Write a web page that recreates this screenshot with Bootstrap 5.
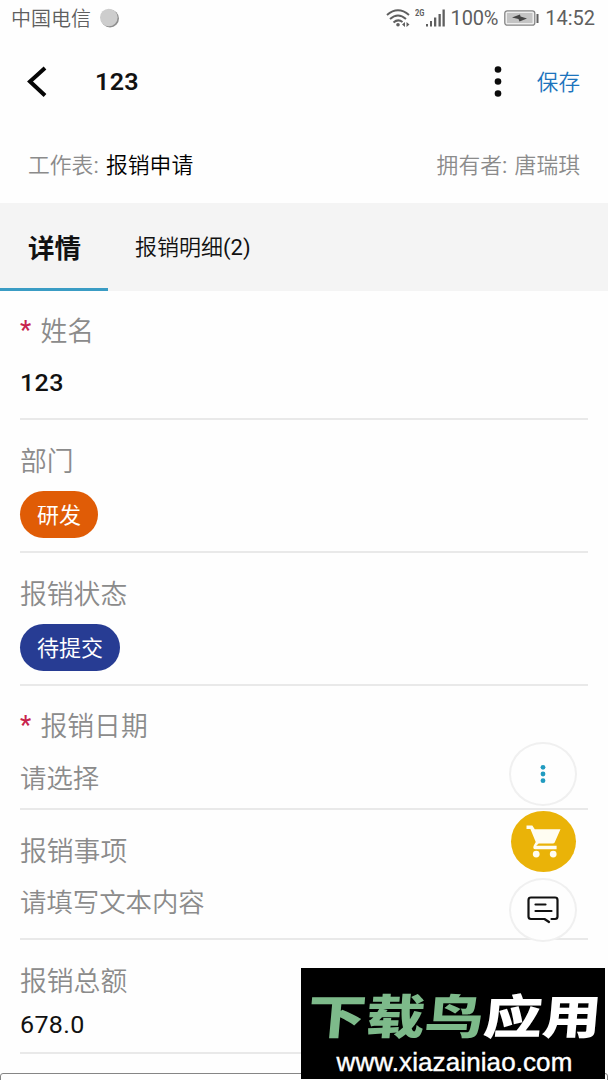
<!DOCTYPE html>
<html lang="zh-CN">
<head>
    <meta charset="UTF-8">
    <meta name="viewport" content="width=device-width, initial-scale=1">
    <title>报销申请</title>

    <!-- Bootstrap CSS -->
    <link href="https://cdn.jsdelivr.net/npm/bootstrap@5.3.0/dist/css/bootstrap.min.css" rel="stylesheet">

    <style>
        body {
            font-family: Roboto, "Noto Sans CJK SC", sans-serif;
            background-color: #fefefe;
            color: #111;
            line-height: 1;
        }
        svg {
            display: block;
            flex: none;
        }
        .screen {
            width: 608px;
            height: 1080px;
        }
        /* Status bar */
        .status-bar {
            height: 36px;
            padding: 0 13px 0 11px;
            font-size: 20px;
            color: #5f5f5f;
        }
        .carrier {
            font-weight: 350;
            padding-top: 2px;
        }
        .percent {
            margin-left: 6px;
            letter-spacing: -.2px;
        }
        .clock {
            margin-left: 5px;
        }
        /* Title bar */
        .title-bar {
            height: 91px;
            padding: 0 28px 0 26px;
        }
        .title-bar h1 {
            font-size: 23px;
            font-weight: 600;
            letter-spacing: .3px;
            margin: 2px 0 0 47px;
            transform: scaleX(1.09);
            transform-origin: left;
        }
        .save-link {
            font-size: 21.6px;
            font-weight: 350;
            color: #1c74bd;
            text-decoration: none;
            margin-left: 35px;
            padding-top: 3px;
        }
        .sheet-info {
            height: 76px;
            padding: 2px 28px 0;
            font-size: 21.8px;
            font-weight: 350;
            color: #8b8b8b;
        }
        .sheet-info b {
            font-weight: 350;
            color: #000;
        }
        .colon {
            font-weight: 400;
            margin-right: 2px;
        }
        /* Tabs */
        .sheet-tabs {
            height: 88px;
            background-color: #f4f4f4;
        }
        .sheet-tabs .nav-link {
            color: #111;
            font-size: 22px;
            font-weight: 350;
            padding: 4px 27px 0;
            border-bottom: 3px solid transparent;
        }
        .sheet-tabs .nav-link.active {
            font-size: 26.5px;
            font-weight: 700;
            padding: 7px 27px 0 28px;
            border-bottom-color: #3a9cc4;
        }
        /* Form fields */
        .field {
            margin: 0 20px;
            border-bottom: 2px solid #e9e9e9;
            font-size: 26.8px;
            font-weight: 350;
            color: #8b8b8b;
        }
        .field-name { height: 129px; }
        .field-tag { height: 133px; }
        .field-date { height: 124px; }
        .field-item { height: 130px; }
        .field-total { height: 114px; }
        .field-label {
            line-height: 40px;
            padding-top: 21px;
        }
        .field-tag .field-label { padding-top: 22px; }
        .field-item .field-label,
        .field-total .field-label { padding-top: 22px; }
        .field-required {
            color: #c8234c;
            font-size: 25px;
            font-weight: 500;
            line-height: 1;
            display: inline-block;
            width: 20.5px;
            transform: translateY(-2px);
        }
        .field-value {
            font-size: 26.4px;
            line-height: 40px;
            margin-top: 12px;
        }
        .field-item .field-value { margin-top: 11px; }
        .field-number {
            font-size: 23px;
            letter-spacing: .3px;
            color: #111;
            font-weight: 400;
            transform: scaleX(1.09);
            transform-origin: left;
        }
        .pill {
            height: 47px;
            padding: 2px 17px 0;
            margin-top: 9px;
            border-radius: 24px;
            font-size: 22px;
            font-weight: 400;
            color: #fff;
        }
        .pill-orange { background-color: #e05c06; }
        .pill-blue { background-color: #273c93; }
        .next-box {
            height: 20px;
            margin-top: 19px;
            border: 1px solid #858585;
            border-radius: 3px;
        }
        /* Floating buttons over the form */
        .float-tools {
            top: 742px;
            left: 509px;
            width: 68px;
        }
        .float-btn {
            width: 68px;
            height: 64px;
            border-radius: 50%;
            background-color: #fefefe;
            border: 2px solid #f0f0f0;
        }
        .float-cart {
            width: 65px;
            height: 61px;
            margin: 5px 0 6px;
            border: 0;
            background-color: #eab308;
        }
        /* Download banner */
        .site-banner {
            left: 301px;
            top: 968px;
            width: 304px;
            height: 111px;
            background-color: #000;
            color: #fff;
        }
        .banner-name {
            font-family: "Noto Sans CJK SC", sans-serif;
            font-size: 47px;
            font-weight: 900;
            line-height: 50px;
            margin: 21px 0 0 2px;
            white-space: nowrap;
            transform: scaleX(1.25) skewX(-4deg);
        }
        .banner-name span {
            color: #7dba8a;
        }
        .banner-url {
            font-family: "Liberation Sans", Arial, sans-serif;
            font-size: 26px;
            line-height: 30px;
            margin-top: 8px;
            margin-left: 3px;
            letter-spacing: .1px;
            -webkit-text-stroke: .4px #fff;
        }
    </style>
</head>
<body>

    <div class="screen position-relative overflow-hidden">

        <div class="status-bar d-flex align-items-center">
            <span class="carrier">中国电信</span>
            <svg class="ms-2" width="22" height="20" viewBox="0 0 22 20">
                <circle cx="11" cy="10.5" r="9" fill="#8e8e8e"/>
                <circle cx="9.8" cy="9.5" r="8.8" fill="#cdcdcd"/>
            </svg>
            <svg class="ms-auto" width="24" height="18" viewBox="0 0 24 18" fill="none" stroke="#5f5f5f" stroke-width="2">
                <path d="M1 6Q12 -3.5 23 6M4 10Q12 3 20 10M7.5 13.5Q12 9.5 16.5 13"/>
                <circle cx="12" cy="15.7" r="1.8" fill="#5f5f5f" stroke="none"/>
                <path d="M19 13v5l-3-2.5zM20.5 13v5l3-2.5z" fill="#5f5f5f" stroke="none"/>
            </svg>
            <svg width="30" height="20" viewBox="0 0 30 20" fill="#5f5f5f" style="margin-left: 5px">
                <text x="0" y="8" font-size="9.5" font-weight="700" textLength="9.5" lengthAdjust="spacingAndGlyphs">2G</text>
                <path d="M11 16h2v2.5h-2zM15 13h2v5.5h-2zM19 9.5h2.3v9h-2.3zM23.5 6h2.3v12.5h-2.3zM27.5 1.5h2.3v17h-2.3z"/>
            </svg>
            <span class="percent">100%</span>
            <svg width="36" height="16" viewBox="0 0 36 16" style="margin-left: 6px">
                <rect x=".8" y=".8" width="30" height="14.4" rx="2.5" fill="#eee" stroke="#858585" stroke-width="1.3"/>
                <rect x="3" y="3" width="25.5" height="10" fill="#c4c4c4"/>
                <path d="M8 7.5L16 4.500L16.500 6.500L23 8.500L15.500 11.500L14.500 9z" fill="#444"/>
                <path d="M32.5 4h2v9h-2z" fill="#5f5f5f"/>
            </svg>
            <span class="clock">14:52</span>
        </div>

        <div class="title-bar d-flex align-items-center">
            <svg width="22" height="32" viewBox="0 0 22 32" fill="none" stroke="#050505" stroke-width="4">
                <path d="M19 2L4 15.5L19 29.5"/>
            </svg>
            <h1>123</h1>
            <svg class="ms-auto" width="8" height="32" viewBox="0 0 8 32" fill="#0b0b0b">
                <circle cx="4" cy="3.5" r="3.3"/>
                <circle cx="4" cy="15.5" r="3.3"/>
                <circle cx="4" cy="27.5" r="3.3"/>
            </svg>
            <a href="#" class="save-link">保存</a>
        </div>

        <div class="sheet-info d-flex justify-content-between align-items-center">
            <span>工作表<span class="colon">:</span> <b>报销申请</b></span>
            <span>拥有者<span class="colon">:</span> 唐瑞琪</span>
        </div>

        <nav class="sheet-tabs nav flex-nowrap">
            <a class="nav-link active d-flex align-items-center" href="#">详情</a>
            <a class="nav-link d-flex align-items-center" href="#">报销明细<span class="fw-normal">(2)</span></a>
        </nav>

        <div class="field field-name">
            <div class="field-label"><span class="field-required">*</span>姓名</div>
            <div class="field-value field-number fw-medium">123</div>
        </div>
        <div class="field field-tag">
            <div class="field-label">部门</div>
            <span class="pill pill-orange d-inline-flex align-items-center">研发</span>
        </div>
        <div class="field field-tag">
            <div class="field-label">报销状态</div>
            <span class="pill pill-blue d-inline-flex align-items-center">待提交</span>
        </div>
        <div class="field field-date">
            <div class="field-label"><span class="field-required">*</span>报销日期</div>
            <div class="field-value">请选择</div>
        </div>
        <div class="field field-item">
            <div class="field-label">报销事项</div>
            <div class="field-value">请填写文本内容</div>
        </div>
        <div class="field field-total">
            <div class="field-label">报销总额</div>
            <div class="field-value field-number mt-1">678.0</div>
        </div>
        <div class="next-box"></div>

        <!-- Floating buttons -->
        <div class="float-tools position-absolute d-flex flex-column align-items-center">
            <div class="float-btn d-flex align-items-center justify-content-center">
                <svg width="6" height="20" viewBox="0 0 6 20" fill="#219bc0">
                    <circle cx="3" cy="3.3" r="2.4"/>
                    <circle cx="3" cy="10" r="2.4"/>
                    <circle cx="3" cy="16.7" r="2.4"/>
                </svg>
            </div>
            <div class="float-btn float-cart d-flex align-items-center justify-content-center">
                <svg width="35" height="33" viewBox="0 0 36 34">
                    <path d="M.5 .5H6.5L9 4.5H35.5L29.5 18Q29 19 27.5 19H13L10.5 21.5H31.5V25H9.5Q6.5 24.5 8 21L10 17.5L4.5 4H.5z" fill="#fffdf2"/>
                    <circle cx="10.5" cy="30" r="3.5" fill="#fffdf2"/>
                    <circle cx="28" cy="30" r="3.5" fill="#fffdf2"/>
                </svg>
            </div>
            <div class="float-btn d-flex align-items-center justify-content-center">
                <svg width="32" height="28" viewBox="0 0 32 28" fill="none" stroke="#111" stroke-width="2.2" stroke-linecap="round" stroke-linejoin="round">
                    <path d="M24.5 23H28q2.5 0 2.5-2.5V4Q30.5 1.5 28 1.5H4Q1.5 1.5 1.5 4V20.5q0 2.5 2.5 2.5H17.5L22 26M8.5 8.5H18.5M8.5 15H24.5"/>
                </svg>
            </div>
        </div>

        <!-- Download site banner -->
        <div class="site-banner position-absolute d-flex flex-column align-items-center">
            <div class="banner-name"><span>下载鸟</span>应用</div>
            <div class="banner-url">www.xiazainiao.com</div>
        </div>
    </div>

    <!-- Bootstrap JS -->
    <script src="https://cdn.jsdelivr.net/npm/bootstrap@5.3.0/dist/js/bootstrap.bundle.min.js"></script>

</body>
</html>
